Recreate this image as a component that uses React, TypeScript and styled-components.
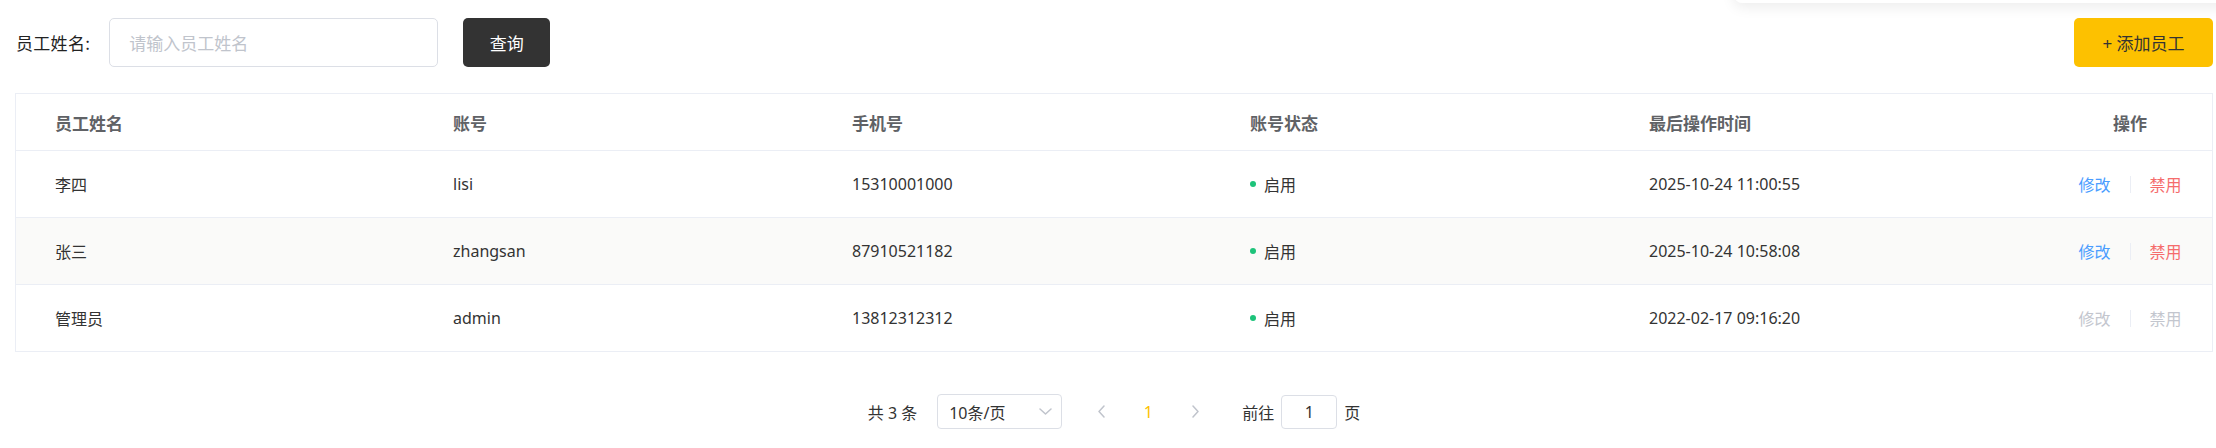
import React from "react";
import styled, { createGlobalStyle } from "styled-components";

const GlobalStyle = createGlobalStyle`
  html, body {
    margin: 0;
    padding: 0;
    background: #ffffff;
  }
  body {
    font-family: "Noto Sans", "Noto Sans CJK SC", sans-serif;
    color: #333333;
    overflow: hidden;
  }
  * { box-sizing: border-box; }
`;

const Page = styled.div`
  position: relative;
  width: 2216px;
  height: 448px;
  padding: 18px 3px 0 15px;
`;

/* floating user card peeking in from the header above */
const FloatingCard = styled.div`
  position: absolute;
  top: -100px;
  left: 1734px;
  right: -20px;
  height: 103px;
  background: #ffffff;
  border-radius: 8px;
  box-shadow: 0 4px 14px rgba(0, 0, 0, 0.08);
`;

const Toolbar = styled.div`
  display: flex;
  align-items: center;
  height: 49px;
`;

const Label = styled.label`
  font-size: 17px;
  color: #222;
  margin-left: 1px;
  margin-right: 19px;
  letter-spacing: 0.3px;
  font-family: "Noto Sans CJK SC", sans-serif;
`;

const SearchInput = styled.input`
  width: 329px;
  height: 49px;
  border: 1px solid #dcdfe6;
  border-radius: 5px;
  padding: 0 19px;
  font-size: 17px;
  font-family: "Noto Sans CJK SC", sans-serif;
  color: #333;
  outline: none;
  &::placeholder { color: #c0c4cc; }
`;

const Button = styled.button<{ $variant: "dark" | "yellow" }>`
  height: 49px;
  border: none;
  border-radius: 5px;
  font-size: 17px;
  font-family: "Noto Sans", "Noto Sans CJK SC", sans-serif;
  cursor: pointer;
  background: ${(p) => (p.$variant === "dark" ? "#333333" : "#fdc100")};
  color: ${(p) => (p.$variant === "dark" ? "#ffffff" : "#333333")};
  width: ${(p) => (p.$variant === "dark" ? "87px" : "139px")};
  margin-left: ${(p) => (p.$variant === "dark" ? "25px" : "auto")};
`;

const Table = styled.div`
  margin-top: 26px;
  border: 1px solid #ebeef5;
  border-bottom: none;
`;

const Row = styled.div<{ $striped?: boolean; $head?: boolean }>`
  display: grid;
  grid-template-columns: 398px 399px 398px 399px 399px 1fr;
  height: ${(p) => (p.$head ? "57px" : "67px")};
  border-bottom: 1px solid #ebeef5;
  background: ${(p) => (p.$striped ? "#fafaf9" : "#ffffff")};
  align-items: center;
`;

const HeadCell = styled.div<{ $center?: boolean }>`
  padding-left: 39px;
  font-size: 17px;
  font-weight: 700;
  color: #606266;
  font-family: "Noto Sans CJK SC", sans-serif;
  text-align: ${(p) => (p.$center ? "center" : "left")};
`;

const Cell = styled.div<{ $center?: boolean; $cjk?: boolean }>`
  padding-left: 39px;
  font-size: 16px;
  color: #333;
  display: flex;
  align-items: center;
  justify-content: ${(p) => (p.$center ? "center" : "flex-start")};
  font-family: ${(p) =>
    p.$cjk ? '"Noto Sans CJK SC", sans-serif' : '"Noto Sans", "Noto Sans CJK SC", sans-serif'};
`;

const StatusDot = styled.span`
  width: 6px;
  height: 6px;
  border-radius: 50%;
  background: #1dc37a;
  margin-right: 8px;
`;

const StatusText = styled.span`
  font-family: "Noto Sans CJK SC", sans-serif;
`;

const ActionLink = styled.span<{ $tone: "blue" | "red" | "muted" }>`
  font-size: 16px;
  font-family: "Noto Sans CJK SC", sans-serif;
  cursor: pointer;
  color: ${(p) =>
    p.$tone === "blue" ? "#4a9dff" : p.$tone === "red" ? "#f56c6c" : "#c3c6ce"};
`;

const Divider = styled.span`
  width: 1px;
  height: 17px;
  background: #ebeef5;
  margin: 0 19px 0 19px;
`;

const Pagination = styled.div`
  display: flex;
  align-items: center;
  justify-content: center;
  margin-top: 42px;
  font-size: 16px;
  color: #333;
  font-family: "Noto Sans", "Noto Sans CJK SC", sans-serif;
`;

const Total = styled.span`
  margin-right: 20px;
`;

const SizeSelect = styled.div`
  width: 125px;
  height: 35px;
  border: 1px solid #dcdfe6;
  border-radius: 4px;
  display: flex;
  align-items: center;
  justify-content: space-between;
  padding: 0 9px 0 11px;
  margin-right: 19px;
`;

const PagerButton = styled.button<{ $active?: boolean }>`
  width: 40px;
  height: 35px;
  border: none;
  background: transparent;
  display: flex;
  align-items: center;
  justify-content: center;
  font-size: 16px;
  font-family: "Noto Sans", sans-serif;
  color: ${(p) => (p.$active ? "#fdc100" : "#c0c4cc")};
  margin-right: 7px;
  padding: 0;
`;

const Jumper = styled.div`
  display: flex;
  align-items: center;
  margin-left: 20px;
  gap: 7px;
`;

const JumpInput = styled.input`
  width: 56px;
  height: 34px;
  border: 1px solid #dcdfe6;
  border-radius: 4px;
  text-align: center;
  font-size: 16px;
  font-family: "Noto Sans", sans-serif;
  color: #333;
  outline: none;
`;

const Chevron = ({ dir }: { dir: "left" | "right" | "down" }) => {
  const d =
    dir === "left"
      ? "M6 1 L1 6.5 L6 12"
      : dir === "right"
      ? "M1 1 L6 6.5 L1 12"
      : "M1 1 L6.5 6 L12 1";
  const w = dir === "down" ? 13 : 7;
  const h = dir === "down" ? 7 : 13;
  return (
    <svg width={w} height={h} viewBox={`0 0 ${w} ${h}`} fill="none">
      <path d={d} stroke="#c0c4cc" strokeWidth="1.5" strokeLinecap="round" strokeLinejoin="round" />
    </svg>
  );
};

type Employee = {
  name: string;
  account: string;
  phone: string;
  time: string;
  locked?: boolean;
};

const employees: Employee[] = [
  { name: "李四", account: "lisi", phone: "15310001000", time: "2025-10-24 11:00:55" },
  { name: "张三", account: "zhangsan", phone: "87910521182", time: "2025-10-24 10:58:08" },
  { name: "管理员", account: "admin", phone: "13812312312", time: "2022-02-17 09:16:20", locked: true },
];

export default function App() {
  return (
    <>
      <GlobalStyle />
      <Page>
        <FloatingCard />
        <Toolbar>
          <Label>员工姓名:</Label>
          <SearchInput placeholder="请输入员工姓名" />
          <Button $variant="dark">查询</Button>
          <Button $variant="yellow">+ 添加员工</Button>
        </Toolbar>

        <Table>
          <Row $head>
            <HeadCell>员工姓名</HeadCell>
            <HeadCell>账号</HeadCell>
            <HeadCell>手机号</HeadCell>
            <HeadCell>账号状态</HeadCell>
            <HeadCell>最后操作时间</HeadCell>
            <HeadCell $center>操作</HeadCell>
          </Row>
          {employees.map((e, i) => (
            <Row key={e.account} $striped={i % 2 === 1}>
              <Cell $cjk>{e.name}</Cell>
              <Cell>{e.account}</Cell>
              <Cell>{e.phone}</Cell>
              <Cell>
                <StatusDot />
                <StatusText>启用</StatusText>
              </Cell>
              <Cell>{e.time}</Cell>
              <Cell $center>
                <ActionLink $tone={e.locked ? "muted" : "blue"}>修改</ActionLink>
                <Divider />
                <ActionLink $tone={e.locked ? "muted" : "red"}>禁用</ActionLink>
              </Cell>
            </Row>
          ))}
        </Table>

        <Pagination>
          <Total>共 3 条</Total>
          <SizeSelect>
            <span>10条/页</span>
            <Chevron dir="down" />
          </SizeSelect>
          <PagerButton>
            <Chevron dir="left" />
          </PagerButton>
          <PagerButton $active>1</PagerButton>
          <PagerButton>
            <Chevron dir="right" />
          </PagerButton>
          <Jumper>
            <span>前往</span>
            <JumpInput defaultValue="1" />
            <span>页</span>
          </Jumper>
        </Pagination>
      </Page>
    </>
  );
}
